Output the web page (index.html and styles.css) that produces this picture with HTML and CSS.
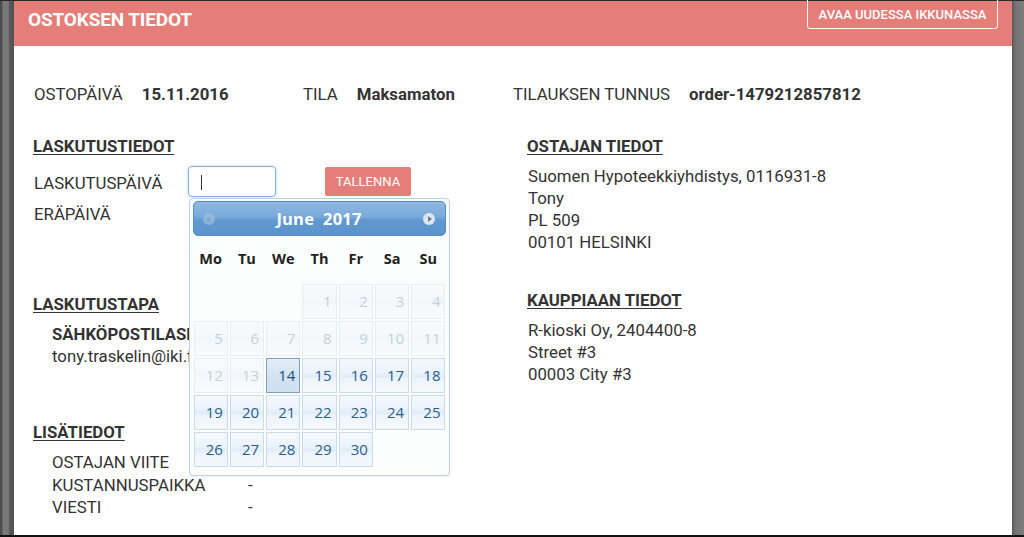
FILE: index.html
```html
<!DOCTYPE html>
<html lang="fi">
<head>
<meta charset="utf-8">
<title>Ostoksen tiedot</title>
<link rel="stylesheet" href="styles.css">
</head>
<body>
<div class="screen">
  <div class="backdrop backdrop-left"></div>
  <div class="modal">
    <header class="modal-header">
      <h1 class="modal-title">OSTOKSEN TIEDOT</h1>
      <button class="btn-outline">AVAA UUDESSA IKKUNASSA</button>
    </header>
    <div class="modal-body">
      <div class="info-row">
        <div class="info-item item-date"><span class="info-label">OSTOPÄIVÄ</span><span class="info-value">15.11.2016</span></div>
        <div class="info-item item-state"><span class="info-label">TILA</span><span class="info-value">Maksamaton</span></div>
        <div class="info-item"><span class="info-label">TILAUKSEN TUNNUS</span><span class="info-value">order-1479212857812</span></div>
      </div>
      <div class="cols">
        <div class="col col-left">
          <h2 class="section-title">LASKUTUSTIEDOT</h2>
          <div class="form-row">
            <span class="form-label">LASKUTUSPÄIVÄ</span>
            <div class="date-field">
              <div class="text-input"><span class="caret"></span></div>
              <div class="datepicker">
                <div class="dp-header">
                  <span class="dp-nav dp-prev"></span>
                  <span class="dp-title">June&nbsp; 2017</span>
                  <span class="dp-nav dp-next"></span>
                </div>
                <div class="dp-weekdays">
                  <span>Mo</span><span>Tu</span><span>We</span><span>Th</span><span>Fr</span><span>Sa</span><span>Su</span>
                </div>
                <div class="dp-grid">
                  <span class="dp-empty"></span><span class="dp-empty"></span><span class="dp-empty"></span>
                  <span class="dp-day disabled">1</span><span class="dp-day disabled">2</span><span class="dp-day disabled">3</span><span class="dp-day disabled">4</span>
                  <span class="dp-day disabled">5</span><span class="dp-day disabled">6</span><span class="dp-day disabled">7</span><span class="dp-day disabled">8</span><span class="dp-day disabled">9</span><span class="dp-day disabled">10</span><span class="dp-day disabled">11</span>
                  <span class="dp-day disabled">12</span><span class="dp-day disabled">13</span><span class="dp-day today">14</span><span class="dp-day">15</span><span class="dp-day">16</span><span class="dp-day">17</span><span class="dp-day">18</span>
                  <span class="dp-day">19</span><span class="dp-day">20</span><span class="dp-day">21</span><span class="dp-day">22</span><span class="dp-day">23</span><span class="dp-day">24</span><span class="dp-day">25</span>
                  <span class="dp-day">26</span><span class="dp-day">27</span><span class="dp-day">28</span><span class="dp-day">29</span><span class="dp-day">30</span>
                </div>
              </div>
            </div>
            <button class="btn-save">TALLENNA</button>
          </div>
          <div class="plain-row">ERÄPÄIVÄ</div>

          <h2 class="section-title title-method">LASKUTUSTAPA</h2>
          <div class="indent">
            <div class="strong-line">SÄHKÖPOSTILASKU</div>
            <div>tony.traskelin@iki.fi</div>
          </div>

          <h2 class="section-title title-extra">LISÄTIEDOT</h2>
          <div class="indent extra-list">
            <div class="kv"><span class="kv-label">OSTAJAN VIITE</span></div>
            <div class="kv"><span class="kv-label">KUSTANNUSPAIKKA</span><span>-</span></div>
            <div class="kv"><span class="kv-label">VIESTI</span><span>-</span></div>
          </div>
        </div>
        <div class="col col-right">
          <h2 class="section-title">OSTAJAN TIEDOT</h2>
          <div class="address">
            <div>Suomen Hypoteekkiyhdistys, 0116931-8</div>
            <div>Tony</div>
            <div>PL 509</div>
            <div>00101 HELSINKI</div>
          </div>
          <h2 class="section-title title-merchant">KAUPPIAAN TIEDOT</h2>
          <div class="address">
            <div>R-kioski Oy, 2404400-8</div>
            <div>Street #3</div>
            <div>00003 City #3</div>
          </div>
        </div>
      </div>
    </div>
  </div>
  <div class="backdrop backdrop-right"></div>
</div>
</body>
</html>
```

FILE: styles.css
```css
* { box-sizing: border-box; }

html, body {
  margin: 0;
  padding: 0;
  width: 1024px;
  height: 537px;
  overflow: hidden;
  background: #111;
}

body {
  font-family: Roboto, "Liberation Sans", Arial, sans-serif;
  font-size: 16.8px;
  color: #333;
}

.screen {
  display: flex;
  width: 1024px;
  height: 537px;
  border-top: 1px solid #2b2b2b;
  border-bottom: 2px solid #111;
  background: #6e6e6e;
}

.backdrop-left {
  width: 14px;
  flex: none;
  background: linear-gradient(90deg, #4e4e4e 0, #4e4e4e 2px, #7a7a7a 3px, #777 8px, #575757 10px, #515151 14px);
}

.backdrop-right {
  width: 12px;
  flex: none;
  background: linear-gradient(90deg, #555 0, #6a6a6a 2px, #777 5px, #7d7d7d 12px);
}

.modal {
  flex: 1;
  background: #fff;
  display: flex;
  flex-direction: column;
  min-width: 0;
}

.modal-header {
  height: 45px;
  flex: none;
  background: #e57e79;
  display: flex;
  justify-content: space-between;
  align-items: flex-start;
  padding: 0 14px 0 14px;
}

.modal-title {
  margin: 0;
  padding-top: 8px;
  font-size: 19px;
  line-height: 22px;
  font-weight: 700;
  color: #fff;
  letter-spacing: -0.15px;
}

.btn-outline {
  margin-top: -7px;
  height: 35px;
  width: 191px;
  padding: 6px 0 0;
  background: transparent;
  border: 1px solid #fff;
  border-radius: 3px;
  color: #fff;
  font-family: Roboto, "Liberation Sans", Arial, sans-serif;
  font-size: 13px;
  font-weight: 500;
  line-height: 16px;
}

.modal-body {
  padding: 37px 0 0 19px;
  line-height: 22px;
}

.info-row {
  display: flex;
  padding-left: 1px;
}

.info-item {
  display: flex;
  gap: 19px;
}

.item-date { width: 269px; }
.item-state { width: 210px; }

.info-value { font-weight: 700; }

.cols {
  display: grid;
  grid-template-columns: 494px 1fr;
  margin-top: 30px;
}

.section-title {
  margin: 0;
  font-size: 16.8px;
  line-height: 22px;
  font-weight: 700;
  text-decoration: underline;
  text-underline-offset: 2px;
  color: #333;
}

.form-row {
  display: flex;
  align-items: center;
  margin-top: 9px;
  height: 31px;
  padding-left: 1px;
}

.form-label {
  width: 154px;
  padding-top: 3px;
}

.date-field {
  position: relative;
  width: 88px;
  height: 31px;
}

.text-input {
  width: 88px;
  height: 31px;
  border: 1px solid #7fb0e0;
  border-radius: 4px;
  box-shadow: 0 0 3px rgba(102, 175, 233, 0.5);
  padding: 8px 0 0 12px;
}

.caret {
  display: block;
  width: 1px;
  height: 15px;
  background: #333;
}

.btn-save {
  margin-left: 49px;
  width: 86px;
  height: 29px;
  border: none;
  border-radius: 2px;
  background: #e57e79;
  color: #fff;
  font-family: Roboto, "Liberation Sans", Arial, sans-serif;
  font-size: 13px;
  padding: 0;
}

.plain-row {
  margin-top: 6px;
  padding-left: 1px;
}

.title-method { margin-top: 68px; }
.title-extra { margin-top: 54px; }

.indent {
  padding-left: 19px;
  margin-top: 8px;
}

.strong-line { font-weight: 700; }

.extra-list .kv {
  display: flex;
  line-height: 22.5px;
}

.kv-label { width: 196px; }

.col-right .address {
  margin-top: 8px;
  padding-left: 1px;
}

.title-merchant { margin-top: 36px; }

/* Datepicker popup */
.datepicker {
  position: absolute;
  top: 32px;
  left: 1px;
  z-index: 10;
  width: 261px;
  height: 278px;
  background: #fcfdfd;
  border: 1px solid #b8d3ea;
  border-radius: 4px;
  padding: 2px;
  font-family: "Open Sans", "DejaVu Sans", sans-serif;
  box-shadow: 0 1px 2px rgba(0, 0, 0, 0.06);
}

.dp-header {
  height: 35px;
  margin: 0 1px;
  border: 1px solid #4f8ec9;
  border-radius: 5px;
  background: linear-gradient(#8fb9e2 0%, #79a9da 45%, #6198d0 55%, #5b94cd 100%);
  display: flex;
  align-items: center;
  justify-content: space-between;
  padding: 0 10px 0 9px;
}

.dp-title {
  color: #fff;
  font-weight: 700;
  font-size: 16.5px;
  line-height: 20px;
  letter-spacing: 0.2px;
}

.dp-nav {
  position: relative;
  width: 12px;
  height: 12px;
  border-radius: 50%;
}

.dp-prev {
  background: #a9c4e0;
  opacity: 0.6;
}

.dp-prev::after {
  content: "";
  position: absolute;
  left: 3px;
  top: 3px;
  border-right: 4px solid #8fb0d3;
  border-top: 3px solid transparent;
  border-bottom: 3px solid transparent;
}

.dp-next { background: #dfe6ee; }

.dp-next::after {
  content: "";
  position: absolute;
  left: 5px;
  top: 3px;
  border-left: 4px solid #6d7e90;
  border-top: 3px solid transparent;
  border-bottom: 3px solid transparent;
}

.dp-weekdays {
  display: grid;
  grid-template-columns: repeat(7, 1fr);
  column-gap: 2px;
  width: 252px;
  margin: 12px auto 0;
  height: 36px;
  font-weight: 700;
  font-size: 14.5px;
  line-height: 22px;
  color: #222;
  text-align: center;
}

.dp-grid {
  display: grid;
  grid-template-columns: repeat(7, 1fr);
  grid-auto-rows: 35px;
  gap: 2px 2px;
  width: 252px;
  margin: 0 auto;
}

.dp-day {
  border: 1px solid #c9dcec;
  background: linear-gradient(#f6f9fd 0%, #eaf3fb 40%, #dfecf8 52%, #edf4fb 60%, #f5f9fd 100%);
  color: #2b5d8c;
  font-size: 15px;
  line-height: 33px;
  text-align: right;
  padding-right: 4px;
}

.dp-day.disabled { opacity: 0.4; color: #6d8fae; }

.dp-day.today {
  border-color: #7f9fbd;
  background: linear-gradient(#e3edf7 0%, #d3e3f2 50%, #cfe0f0 100%);
  color: #1f4f7a;
}
```
